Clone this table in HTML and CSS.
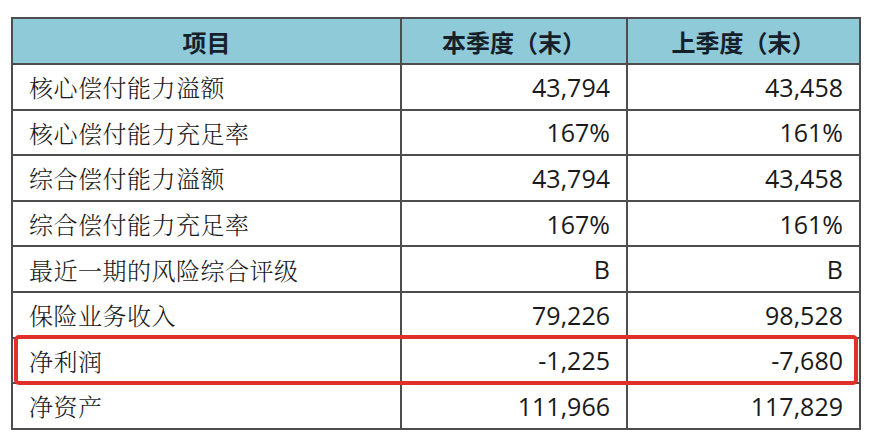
FILE: index.html
```html
<!DOCTYPE html>
<html lang="zh-CN">
<head>
<meta charset="utf-8">
<link rel="stylesheet" href="styles.css">
</head>
<body>
<div class="wrap">
  <table class="sheet">
    <colgroup>
      <col class="c1"><col class="c2"><col class="c3">
    </colgroup>
    <thead>
      <tr><th>项目</th><th>本季度（末）</th><th>上季度（末）</th></tr>
    </thead>
    <tbody>
      <tr><td class="name">核心偿付能力溢额</td><td class="num">43,794</td><td class="num">43,458</td></tr>
      <tr><td class="name">核心偿付能力充足率</td><td class="num">167%</td><td class="num">161%</td></tr>
      <tr><td class="name">综合偿付能力溢额</td><td class="num">43,794</td><td class="num">43,458</td></tr>
      <tr><td class="name">综合偿付能力充足率</td><td class="num">167%</td><td class="num">161%</td></tr>
      <tr><td class="name">最近一期的风险综合评级</td><td class="num">B</td><td class="num">B</td></tr>
      <tr><td class="name">保险业务收入</td><td class="num">79,226</td><td class="num">98,528</td></tr>
      <tr><td class="name">净利润</td><td class="num">-1,225</td><td class="num">-7,680</td></tr>
      <tr><td class="name">净资产</td><td class="num">111,966</td><td class="num">117,829</td></tr>
    </tbody>
  </table>
  <div class="highlight"></div>
</div>
</body>
</html>
```
FILE: styles.css
```css
html, body {
  margin: 0;
  background: #ffffff;
}
body {
  padding: 17px 0 0 11px;
}
.wrap {
  position: relative;
  width: 848px;
}
.sheet {
  border-collapse: collapse;
  width: 848px;
  table-layout: fixed;
}
.c1 { width: 389px; }
.c2 { width: 226px; }
.c3 { width: 233px; }
.sheet th,
.sheet td {
  border: 2px solid #4d4d4d;
  padding: 0;
}
.sheet th {
  height: 44px;
  background: #8fcad8;
  font-family: "Noto Sans CJK SC", sans-serif;
  font-weight: 700;
  font-size: 24px;
  color: #15202a;
  text-align: center;
}
.sheet td {
  height: 43.6px;
  color: #1a1a1a;
}
.name {
  font-family: "Noto Serif CJK SC", "Noto Sans CJK SC", serif;
  font-weight: 300;
  font-size: 24px;
  padding-left: 16px !important;
  letter-spacing: 0.5px;
}
.num {
  font-family: "Open Sans", sans-serif;
  font-size: 25px;
  text-align: right;
  padding-right: 16px !important;
}
.highlight {
  position: absolute;
  left: 3px;
  top: 318px;
  width: 836px;
  height: 42px;
  border: 4px solid #e0302a;
  border-radius: 5px;
}
```
